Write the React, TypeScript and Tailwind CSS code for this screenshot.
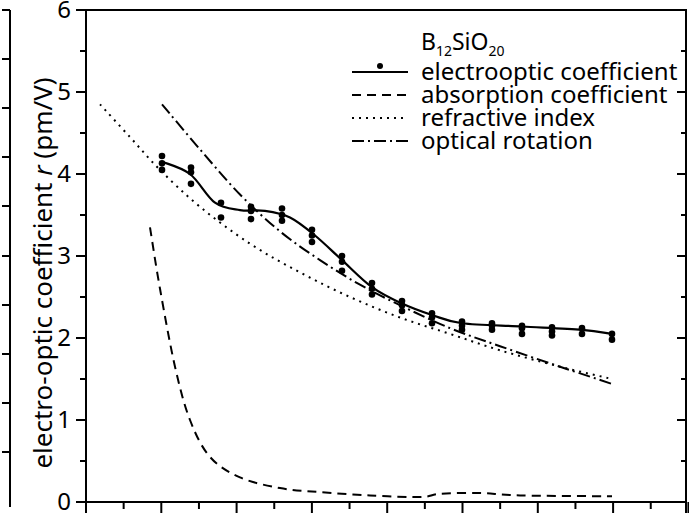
import React from "react";

const Y = (v: number) => 502 - 82 * v;
const smooth = (a: [number, number][]) => {
  const p = a.map(([x, v]) => [x, Y(v)]);
  let d = `M${p[0][0]},${p[0][1]}`;
  for (let i = 0; i < p.length - 1; i++) {
    const p0 = p[i - 1] || p[i], p1 = p[i], p2 = p[i + 1], p3 = p[i + 2] || p2;
    const c1x = p1[0] + (p2[0] - p0[0]) / 6, c1y = p1[1] + (p2[1] - p0[1]) / 6;
    const c2x = p2[0] - (p3[0] - p1[0]) / 6, c2y = p2[1] - (p3[1] - p1[1]) / 6;
    d += ` C${c1x},${c1y} ${c2x},${c2y} ${p2[0]},${p2[1]}`;
  }
  return d;
};

const eo: [number, number][] = [[162,4.15],[190,4.0],[215,3.65],[240,3.56],[265,3.55],[290,3.47],[315,3.25],[342,2.95],[372,2.62],[402,2.42],[432,2.28],[462,2.18],[522,2.14],[582,2.1],[612,2.05]];
const ab: [number, number][] = [[150,3.35],[160,2.6],[175,1.65],[190,1.0],[210,0.55],[240,0.3],[280,0.17],[320,0.12],[370,0.08],[420,0.06],[440,0.1],[480,0.11],[520,0.08],[612,0.07]];
const rf: [number, number][] = [[100,4.85],[130,4.45],[160,4.05],[200,3.6],[250,3.15],[300,2.8],[350,2.5],[400,2.25],[450,2.05],[500,1.85],[560,1.65],[612,1.5]];
const orr: [number, number][] = [[162,4.85],[200,4.3],[240,3.75],[280,3.3],[320,2.95],[360,2.65],[400,2.4],[450,2.12],[500,1.9],[560,1.65],[612,1.44]];
const dots: [number, number[]][] = [[162,[4.22,4.13,4.05]],[191,[4.08,4.02,3.88]],[221,[3.65,3.47]],[251,[3.6,3.55,3.45]],[282,[3.58,3.5,3.43]],[312,[3.32,3.25,3.17]],[342,[3.0,2.93,2.82]],[372,[2.67,2.6,2.53]],[402,[2.45,2.4,2.33]],[432,[2.3,2.25,2.18]],[462,[2.2,2.15,2.1]],[492,[2.18,2.15,2.1]],[522,[2.15,2.12,2.05]],[552,[2.13,2.08,2.03]],[582,[2.12,2.05]],[612,[2.05,1.98]]];

export default function App() {
  const xt = Array.from({ length: 17 }, (_, i) => 86 + i * 37.65);
  return (
    <div className="w-[689px] h-[513px] bg-white overflow-hidden font-['Liberation_Sans',Arial,sans-serif]">
      <svg width="689" height="513" viewBox="0 0 689 513">
        <g stroke="#000" strokeWidth="2" fill="none">
          <line x1="10" y1="10" x2="10" y2="507" />
          {[10, 59, 108, 157, 206, 256, 305, 354, 403, 452].map((y) => <line key={y} x1="2" y1={y} x2="10" y2={y} />)}
          <line x1="86" y1="9" x2="86" y2="513" />
          <line x1="686" y1="9" x2="686" y2="513" />
          <line x1="85" y1="10" x2="687" y2="10" />
          <line x1="85" y1="502" x2="687" y2="502" />
          {Array.from({ length: 13 }, (_, i) => i * 0.5).map((v) => (
            <g key={v}>
              <line x1={v % 1 === 0 ? 76 : 80} y1={Y(v)} x2="86" y2={Y(v)} />
              <line x1={v % 1 === 0 ? 677 : 681} y1={Y(v)} x2="686" y2={Y(v)} />
            </g>
          ))}
          {xt.map((x, i) => <line key={i} x1={x} y1="502" x2={x} y2={i % 2 === 0 ? 513 : 509} />)}
          <path d={smooth(eo)} strokeWidth="2.2" />
          <path d={smooth(ab)} strokeDasharray="9 6" />
          <path d={smooth(rf)} strokeDasharray="2 5" />
          <path d={smooth(orr)} strokeDasharray="12 4 2 4" />
          <line x1="352" y1="72" x2="408" y2="72" strokeWidth="2.2" />
          <line x1="352" y1="95" x2="408" y2="95" strokeDasharray="9 6" />
          <line x1="352" y1="118" x2="408" y2="118" strokeDasharray="2 5" />
          <line x1="352" y1="141" x2="408" y2="141" strokeDasharray="12 4 2 4" />
        </g>
        <g fill="#000">
          {dots.flatMap(([x, vs]) => vs.map((v, j) => <circle key={x + "-" + j} cx={x} cy={Y(v)} r="3.3" />))}
          <circle cx="380" cy="66" r="3" />
          {[0, 1, 2, 3, 4, 5, 6].map((v) => (
            <text key={v} x="71" y={Math.min(511, Math.max(18, Y(v) + 8))} fontSize="24" textAnchor="end">{v}</text>
          ))}
          <text transform="translate(52,273) rotate(-90)" fontSize="26" textAnchor="middle">
            electro-optic coefficient <tspan fontStyle="italic">r</tspan> (pm/V)
          </text>
          <text x="421" y="50" fontSize="23">B<tspan fontSize="14" dy="6">12</tspan><tspan dy="-6">SiO</tspan><tspan fontSize="14" dy="6">20</tspan></text>
          <text x="421" y="80" fontSize="24">electrooptic coefficient</text>
          <text x="421" y="103" fontSize="24">absorption coefficient</text>
          <text x="421" y="126" fontSize="24">refractive index</text>
          <text x="421" y="149" fontSize="24">optical rotation</text>
        </g>
      </svg>
    </div>
  );
}
